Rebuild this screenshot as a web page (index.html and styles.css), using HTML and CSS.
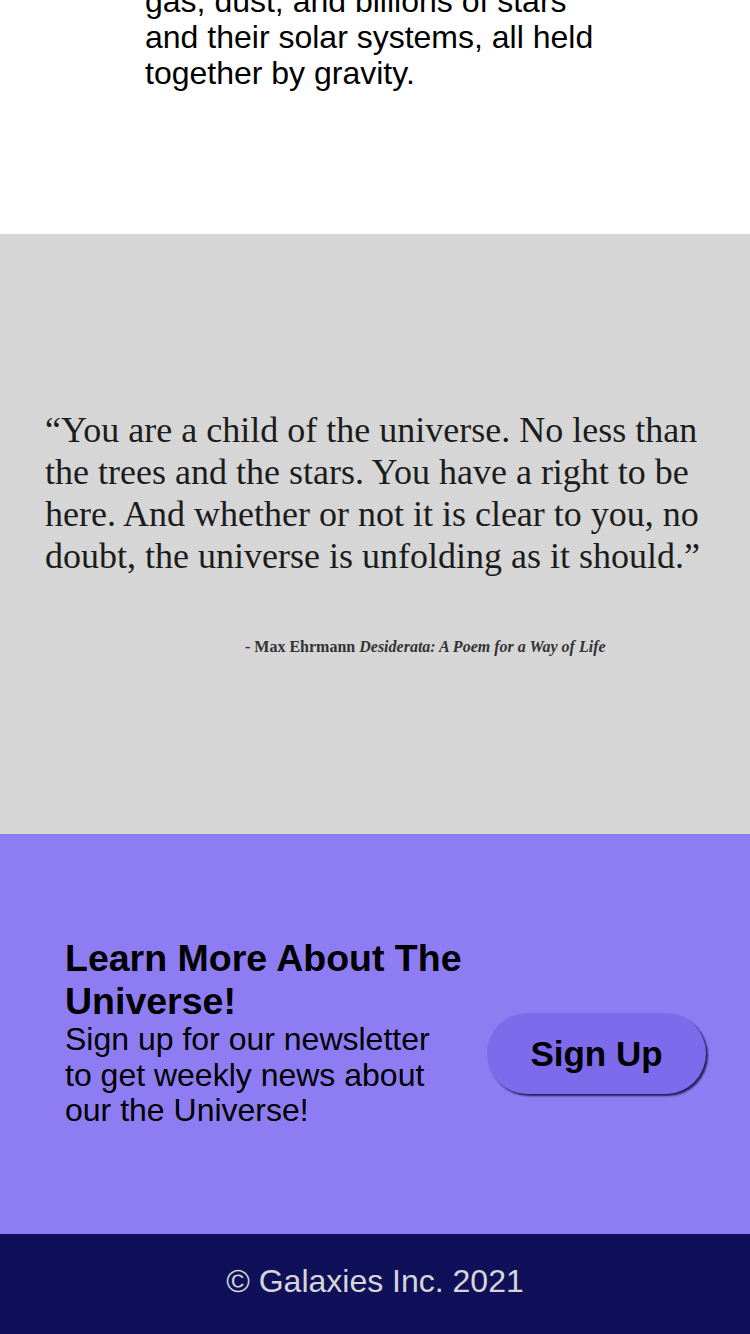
FILE: index.html
```html
<!DOCTYPE html>
<html lang="en">
<head>
<meta charset="utf-8">
<title>Galaxies</title>
<link rel="stylesheet" href="styles.css">
</head>
<body>
  <section class="intro">
    <p class="intro-text">gas, dust, and billions of stars and their solar systems, all held together by gravity.</p>
  </section>
  <section class="quote">
    <blockquote class="quote-text">“You are a child of the universe. No less than the trees and the stars. You have a right to be here. And whether or not it is clear to you, no doubt, the universe is unfolding as it should.”</blockquote>
    <p class="quote-cite">- Max Ehrmann <em>Desiderata: A Poem for a Way of Life</em></p>
  </section>
  <section class="newsletter">
    <div class="newsletter-text">
      <h2 class="newsletter-title">Learn More About The Universe!</h2>
      <p class="newsletter-desc">Sign up for our newsletter to get weekly news about our the Universe!</p>
    </div>
    <button class="signup-btn" type="button">Sign Up</button>
  </section>
  <footer class="footer">© Galaxies Inc. 2021</footer>
</body>
</html>
```

FILE: styles.css
```css
html, body {
  margin: 0;
  padding: 0;
}
body {
  width: 750px;
  height: 1334px;
  overflow: hidden;
  font-family: "Liberation Sans", Arial, sans-serif;
}
.intro {
  background: #ffffff;
  height: 234px;
  overflow: hidden;
}
.intro-text {
  margin: -17px 0 0 145px;
  width: 458px;
  font-size: 32px;
  line-height: 36px;
  color: #000;
}
.quote {
  background: #d6d6d6;
  height: 600px;
  box-sizing: border-box;
  padding: 175px 40px 0 45px;
}
.quote-text {
  margin: 0;
  font-family: "Liberation Serif", "Times New Roman", serif;
  font-size: 36px;
  line-height: 42px;
  color: #1c1c1c;
}
.quote-cite {
  margin: 61px 0 0 200px;
  font-family: "Liberation Serif", "Times New Roman", serif;
  font-size: 16px;
  font-weight: bold;
  color: #333;
}
.quote-cite em {
  font-style: italic;
}
.newsletter {
  background: #8e7cf3;
  height: 400px;
  box-sizing: border-box;
  padding: 0 44px 0 65px;
  display: flex;
  align-items: center;
  justify-content: space-between;
}
.newsletter-text {
  width: 398px;
  margin-top: -2px;
}
.newsletter-title {
  margin: 0;
  font-size: 37.5px;
  line-height: 43px;
  font-weight: bold;
  color: #000;
}
.newsletter-desc {
  margin: -1px 0 0;
  font-size: 32px;
  line-height: 35.5px;
  color: #000;
}
.signup-btn {
  width: 219px;
  height: 81px;
  border: none;
  border-radius: 41px;
  background: #7d6bec;
  box-shadow: 2px 2px 2px rgba(20, 15, 60, 0.85);
  font-family: "Liberation Sans", Arial, sans-serif;
  font-size: 35px;
  font-weight: bold;
  color: #000;
  padding: 0;
  margin-top: 39px;
}
.footer {
  background: #10105a;
  height: 100px;
  box-sizing: border-box;
  padding-bottom: 5px;
  display: flex;
  align-items: center;
  justify-content: center;
  font-size: 32px;
  color: #d6d6d6;
}
```
